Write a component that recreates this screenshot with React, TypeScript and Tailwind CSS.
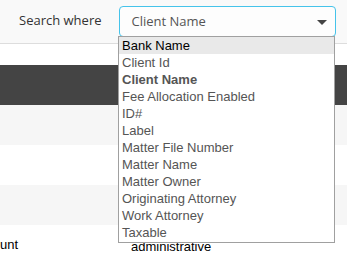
import React from 'react';

const options = [
  'Bank Name',
  'Client Id',
  'Client Name',
  'Fee Allocation Enabled',
  'ID#',
  'Label',
  'Matter File Number',
  'Matter Name',
  'Matter Owner',
  'Originating Attorney',
  'Work Attorney',
  'Taxable',
];

const selected = 'Client Name';
const hovered = 'Bank Name';

export default function App() {
  return (
    <div className="relative w-[347px] h-[255px] overflow-hidden bg-white">
      {/* Панель поиска */}
      <div className="h-[44px] bg-[#f9f9f9] border-b border-[#dddddd] flex items-start">
        <span
          className="ml-[19px] mt-[10px] text-[13px] leading-[20px] text-[#333]"
          style={{ fontFamily: '"Open Sans", sans-serif' }}
        >
          Search where
        </span>
        <div className="ml-[17px] mt-[6px] w-[217px] h-[31px] rounded-[4px] border border-[#45c3ea] bg-[#fdfdfd] flex items-center justify-between pl-[12px] pr-[8px]">
          <span
            className="text-[13px] text-[#555]"
            style={{ fontFamily: '"Open Sans", sans-serif' }}
          >
            {selected}
          </span>
          <svg width="10" height="5" viewBox="0 0 10 5" className="mt-[1px]">
            <path d="M0 0 L10 0 L5 5 Z" fill="#444" />
          </svg>
        </div>
      </div>

      {/* Таблица */}
      <div className="mt-[21px]" style={{ fontFamily: '"Liberation Sans", Arial, sans-serif' }}>
        <div className="h-[40px] bg-[#444]" />
        <div className="h-[40px] bg-[#f6f6f6]" />
        <div className="h-[40px] bg-white" />
        <div className="h-[40px] bg-[#f6f6f6]" />
        <div className="h-[40px] bg-white flex items-center text-[13px] text-black">
          <span className="w-[131px]">unt</span>
          <span className="pt-[3px]">administrative</span>
        </div>
      </div>

      {/* Выпадающий список */}
      <ul
        className="absolute left-[118px] top-[36px] w-[217px] h-[207px] border border-[#a0a0a0] bg-white"
        style={{ fontFamily: '"Liberation Sans", Arial, sans-serif' }}
      >
        {options.map((opt) => (
          <li
            key={opt}
            className={`h-[17px] leading-[17px] pl-[3px] text-[13px] ${
              opt === hovered ? 'bg-[#e9e9e9] text-black' : 'text-[#555]'
            } ${opt === selected ? 'font-bold' : ''}`}
          >
            {opt}
          </li>
        ))}
      </ul>
    </div>
  );
}
